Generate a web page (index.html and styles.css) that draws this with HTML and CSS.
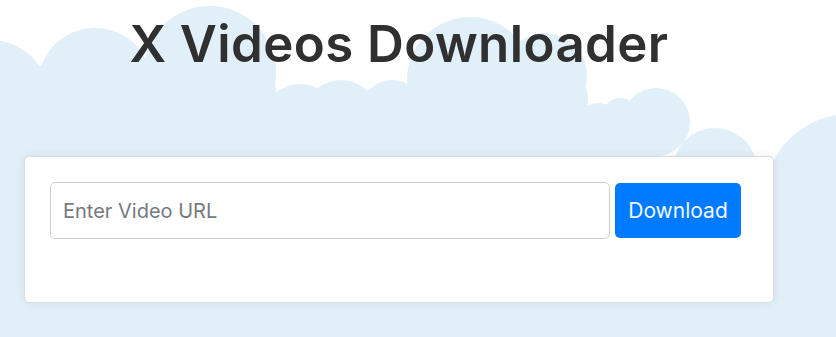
FILE: index.html
```html
<!DOCTYPE html>
<html lang="en">
<head>
<meta charset="utf-8">
<title>X Videos Downloader</title>
<link rel="stylesheet" href="styles.css">
</head>
<body>
<svg class="clouds" viewBox="0 0 836 337" preserveAspectRatio="none" aria-hidden="true">
  <g fill="#e1eff8">
    <circle cx="-10" cy="100" r="60"/>
    <circle cx="95" cy="85" r="57"/>
    <circle cx="210" cy="72" r="66"/>
    <circle cx="238" cy="90" r="38"/>
    <rect x="0" y="66" width="275" height="271"/>
    <circle cx="300" cy="122" r="38"/>
    <circle cx="341" cy="118" r="38"/>
    <circle cx="392" cy="112" r="32"/>
    <circle cx="470" cy="80" r="63"/>
    <circle cx="545" cy="75" r="42"/>
    <circle cx="548" cy="100" r="40"/>
    <circle cx="598" cy="126" r="23"/>
    <rect x="260" y="112" width="400" height="225"/>
    <circle cx="620" cy="115" r="17"/>
    <circle cx="656" cy="122" r="34"/>
    <circle cx="715" cy="170" r="42"/>
    <circle cx="850" cy="200" r="86"/>
    <rect x="0" y="160" width="836" height="177"/>
  </g>
</svg>
<main class="wrap">
  <h1 class="title">X Videos Downloader</h1>
  <section class="card">
    <form class="row">
      <input class="url" type="text" placeholder="Enter Video URL">
      <button class="btn" type="button">Download</button>
    </form>
  </section>
</main>
</body>
</html>
```
FILE: styles.css
```css
html, body {
  margin: 0;
  padding: 0;
}
body {
  position: relative;
  width: 836px;
  height: 337px;
  overflow: hidden;
  background: #ffffff;
  font-family: "Inter", "Open Sans", sans-serif;
}
.clouds {
  position: absolute;
  left: 0;
  top: 0;
  width: 836px;
  height: 337px;
  z-index: 0;
}
.wrap {
  position: relative;
  z-index: 1;
  margin-left: 24px;
  width: 750px;
}
.title {
  margin: 0;
  padding-top: 13px;
  text-align: center;
  font-size: 51px;
  font-weight: 600;
  line-height: 61px;
  color: #303030;
  letter-spacing: 0.4px;
}
.card {
  margin-top: 82px;
  height: 147px;
  box-sizing: border-box;
  background: #ffffff;
  border: 1px solid #d9dde1;
  border-radius: 5px;
  box-shadow: 0 0 10px rgba(0, 0, 0, 0.07);
  padding: 25px 25px;
}
.row {
  display: grid;
  grid-template-columns: 560px 126px;
  column-gap: 5px;
  align-items: center;
  margin: 0;
}
.url {
  box-sizing: border-box;
  height: 57px;
  margin: 0;
  padding: 0 12px;
  border: 1px solid #cfd2d5;
  border-radius: 5px;
  font-family: inherit;
  font-size: 20px;
  color: #333;
  background: #fff;
  outline: none;
}
.url::placeholder {
  color: #757a80;
}
.btn {
  box-sizing: border-box;
  height: 55px;
  margin: 0;
  padding: 0;
  border: 0;
  border-radius: 5px;
  background: #007bff;
  color: #f2f8ff;
  font-family: inherit;
  font-size: 21px;
  font-weight: 400;
}
```
